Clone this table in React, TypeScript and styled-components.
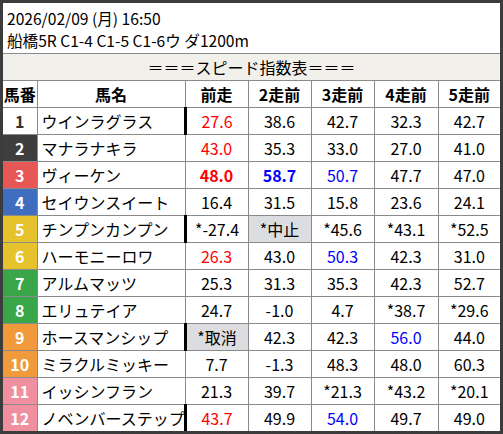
import React from "react";
import styled, { createGlobalStyle } from "styled-components";

const Global = createGlobalStyle`
  html, body { margin: 0; padding: 0; background: #ffffff; }
  body { font-family: "Noto Sans CJK JP", "Noto Sans", sans-serif; }
`;

const Frame = styled.div`
  width: 503px;
  height: 434px;
  box-sizing: border-box;
  border: 3px solid #3c3c3c;
  background: #ffffff;
  overflow: hidden;
`;

const Header = styled.div`
  height: 50px;
  box-sizing: border-box;
  padding: 4px 4px 2px;
  font-size: 15.6px;
  line-height: 22px;
  color: #000;
`;

const Table = styled.table`
  width: 497px;
  table-layout: fixed;
  border-collapse: collapse;
  font-size: 16px;
  color: #000;
`;

const TitleCell = styled.td`
  height: 26px;
  padding: 0;
  text-align: center;
  background: #f2f0eb;
  border-top: 1px solid #8a8a8a;
  border-bottom: 1px solid #8a8a8a;
  line-height: 26px;
`;

const HeadCell = styled.th`
  height: 26px;
  padding: 0;
  font-weight: bold;
  text-align: center;
  background: #ffffff;
  border: 1px solid #8a8a8a;
  border-top: none;
  &:first-child { border-left: none; }
  &:last-child { border-right: none; }
`;

const WAKU: Record<number, [string, string]> = {
  1: ["#ffffff", "#333333"],
  2: ["#3e3e3e", "#ffffff"],
  3: ["#e85656", "#ffffff"],
  4: ["#3f6dbf", "#ffffff"],
  5: ["#e6c22c", "#ffffff"],
  6: ["#e6c22c", "#ffffff"],
  7: ["#3aa64a", "#ffffff"],
  8: ["#3aa64a", "#ffffff"],
  9: ["#f09a3c", "#ffffff"],
  10: ["#f09a3c", "#ffffff"],
  11: ["#f08fa0", "#ffffff"],
  12: ["#f08fa0", "#ffffff"],
};

const NumCell = styled.td<{ $bg: string; $fg: string }>`
  height: 26px;
  padding: 0;
  text-align: center;
  font-weight: bold;
  background: ${(p) => p.$bg};
  color: ${(p) => p.$fg};
  border: 1px solid #8a8a8a;
  border-left: none;
`;

const NameCell = styled.td`
  padding: 0 0 0 4px;
  text-align: left;
  white-space: nowrap;
  border: 1px solid #8a8a8a;
`;

type Tone = "n" | "r" | "R" | "b" | "B";

const ValCell = styled.td<{ $tone: Tone; $gray?: boolean; $mark?: boolean }>`
  padding: 0;
  text-align: center;
  white-space: nowrap;
  border: 1px solid #8a8a8a;
  &:last-child { border-right: none; }
  ${(p) => (p.$mark ? "border-left: 3px solid #000000;" : "")}
  background: ${(p) => (p.$gray ? "#dcdde1" : "transparent")};
  color: ${(p) =>
    p.$tone === "r" || p.$tone === "R"
      ? "#ff0000"
      : p.$tone === "b" || p.$tone === "B"
      ? "#0000ff"
      : "#000000"};
  font-weight: ${(p) => (p.$tone === "R" || p.$tone === "B" ? "bold" : "normal")};
`;

type V = [string, Tone?, boolean?];
type Row = { n: number; name: string; mark?: boolean; vals: V[] };

const rows: Row[] = [
  { n: 1, name: "ウインラグラス", mark: true, vals: [["27.6", "r"], ["38.6"], ["42.7"], ["32.3"], ["42.7"]] },
  { n: 2, name: "マナラナキラ", vals: [["43.0", "r"], ["35.3"], ["33.0"], ["27.0"], ["41.0"]] },
  { n: 3, name: "ヴィーケン", vals: [["48.0", "R"], ["58.7", "B"], ["50.7", "b"], ["47.7"], ["47.0"]] },
  { n: 4, name: "セイウンスイート", vals: [["16.4"], ["31.5"], ["15.8"], ["23.6"], ["24.1"]] },
  { n: 5, name: "チンプンカンプン", mark: true, vals: [["*-27.4"], ["*中止", "n", true], ["*45.6"], ["*43.1"], ["*52.5"]] },
  { n: 6, name: "ハーモニーロワ", vals: [["26.3", "r"], ["43.0"], ["50.3", "b"], ["42.3"], ["31.0"]] },
  { n: 7, name: "アルムマッツ", vals: [["25.3"], ["31.3"], ["35.3"], ["42.3"], ["52.7"]] },
  { n: 8, name: "エリュテイア", vals: [["24.7"], ["-1.0"], ["4.7"], ["*38.7"], ["*29.6"]] },
  { n: 9, name: "ホースマンシップ", mark: true, vals: [["*取消", "n", true], ["42.3"], ["42.3"], ["56.0", "b"], ["44.0"]] },
  { n: 10, name: "ミラクルミッキー", vals: [["7.7"], ["-1.3"], ["48.3"], ["48.0"], ["60.3"]] },
  { n: 11, name: "イッシンフラン", vals: [["21.3"], ["39.7"], ["*21.3"], ["*43.2"], ["*20.1"]] },
  { n: 12, name: "ノベンバーステップ", mark: true, vals: [["43.7", "r"], ["49.9"], ["54.0", "b"], ["49.7"], ["49.0"]] },
];

const heads = ["馬番", "馬名", "前走", "2走前", "3走前", "4走前", "5走前"];
const widths = [34, 148, 63, 63, 63, 64, 62];

export default function App() {
  return (
    <>
      <Global />
      <Frame>
        <Header>
          <div>2026/02/09 (月) 16:50</div>
          <div>船橋5R C1-4 C1-5 C1-6ウ ダ1200m</div>
        </Header>
        <Table>
          <colgroup>
            {widths.map((w, i) => (
              <col key={i} style={{ width: w }} />
            ))}
          </colgroup>
          <tbody>
            <tr>
              <TitleCell colSpan={7}>＝＝＝スピード指数表＝＝＝</TitleCell>
            </tr>
            <tr>
              {heads.map((h) => (
                <HeadCell key={h}>{h}</HeadCell>
              ))}
            </tr>
            {rows.map((r) => {
              const [bg, fg] = WAKU[r.n];
              return (
                <tr key={r.n}>
                  <NumCell $bg={bg} $fg={fg}>{r.n}</NumCell>
                  <NameCell>{r.name}</NameCell>
                  {r.vals.map((v, i) => (
                    <ValCell
                      key={i}
                      $tone={v[1] ?? "n"}
                      $gray={v[2]}
                      $mark={i === 0 && r.mark}
                    >
                      {v[0]}
                    </ValCell>
                  ))}
                </tr>
              );
            })}
          </tbody>
        </Table>
      </Frame>
    </>
  );
}
